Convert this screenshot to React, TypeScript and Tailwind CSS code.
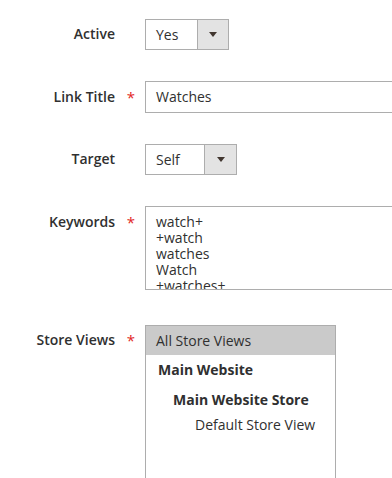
import React from "react";

const Arrow = () => (
  <svg width="8" height="5" viewBox="0 0 8 5">
    <polygon points="0,0 8,0 4,5" fill="#41362f" />
  </svg>
);

function Row({
  label,
  required,
  children,
  className,
  labelPad,
}: {
  label: string;
  required?: boolean;
  children: React.ReactNode;
  className?: string;
  labelPad?: string;
}) {
  return (
    <div className={"flex " + (className || "")}>
      <div className={"w-[115px] shrink-0 text-right font-semibold text-[14px] leading-[20px] text-[#303030] " + (labelPad || "")}>
        {label}
      </div>
      <div className={"w-[30px] shrink-0 text-center text-[#e22626] text-[15px] leading-[20px] " + (labelPad || "")}>
        {required ? <span className="inline-block pl-[2px]">*</span> : null}
      </div>
      <div className="flex-1 min-w-0">{children}</div>
    </div>
  );
}

function Select({ value, width, textW }: { value: string; width: string; textW: string }) {
  return (
    <div className={"flex h-[31px] border border-[#adadad] bg-white " + width}>
      <div className={"pl-[10px] text-[14px] leading-[29px] text-[#303030] " + textW}>{value}</div>
      <div className="flex-1 border-l border-[#adadad] bg-[#e3e3e3] flex items-center justify-center">
        <Arrow />
      </div>
    </div>
  );
}

export default function App() {
  return (
    <div
      className="w-[392px] h-[478px] overflow-hidden bg-white"
      style={{ fontFamily: '"Open Sans", "Liberation Sans", sans-serif' }}
    >
      <div className="pt-[19px]">
        <Row label="Active" labelPad="pt-[5px]">
          <Select value="Yes" width="w-[84px]" textW="w-[51px]" />
        </Row>
        <Row label="Link Title" required className="mt-[31px]" labelPad="pt-[6px]">
          <div className="h-[32px] border border-[#adadad] border-r-0 pl-[10px] text-[14px] leading-[30px] text-[#303030]">
            Watches
          </div>
        </Row>
        <Row label="Target" className="mt-[31px]" labelPad="pt-[5px]">
          <Select value="Self" width="w-[92px]" textW="w-[58px]" />
        </Row>
        <Row label="Keywords" required className="mt-[31px]" labelPad="pt-[6px]">
          <div className="h-[84px] overflow-hidden border border-[#adadad] border-r-0 pl-[10px] pt-[7px] text-[14px] leading-[16px] text-[#303030]">
            <div>watch+</div>
            <div>+watch</div>
            <div>watches</div>
            <div>Watch</div>
            <div>+watches+</div>
          </div>
        </Row>
        <Row label="Store Views" required className="mt-[35px]" labelPad="pt-[5px]">
          <div className="w-[191px] h-[160px] border border-[#adadad] border-b-0 text-[14px] text-[#303030]">
            <div className="h-[29px] bg-[#cacaca] pl-[10px] leading-[29px]">All Store Views</div>
            <div className="pl-[12px] font-bold leading-[30px]">Main Website</div>
            <div className="pl-[27px] font-bold leading-[30px]">Main Website Store</div>
            <div className="pl-[49px] leading-[20px]">Default Store View</div>
          </div>
        </Row>
      </div>
    </div>
  );
}
